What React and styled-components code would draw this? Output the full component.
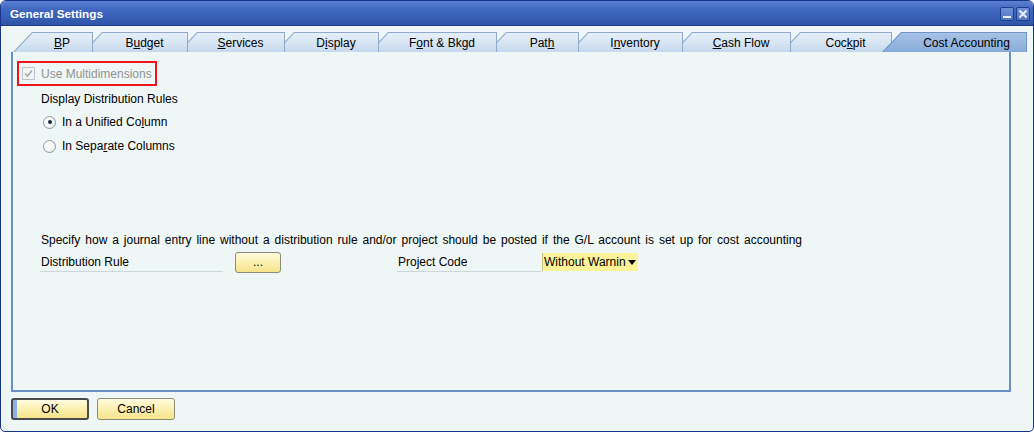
import React from "react";
import styled, { createGlobalStyle } from "styled-components";

const Global = createGlobalStyle`
  html, body {
    margin: 0;
    padding: 0;
    background: #ffffff;
  }
  body {
    font-family: "Liberation Sans", Arial, sans-serif;
  }
`;

const Window = styled.div`
  width: 1034px;
  height: 432px;
  box-sizing: border-box;
  border: 1px solid #17358a;
  border-radius: 6px 6px 5px 5px;
  background: #eff6f6;
  overflow: hidden;
  display: flex;
  flex-direction: column;
`;

const TitleBar = styled.div`
  height: 24px;
  flex: none;
  display: flex;
  align-items: center;
  justify-content: space-between;
  padding: 0 3px 0 9px;
  background: linear-gradient(#5b80d2 0%, #4168c0 35%, #365db3 75%, #2f53a6 100%);
  border-bottom: 1px solid #1d3c8c;
`;

const Title = styled.span`
  color: #ffffff;
  font-weight: 700;
  font-size: 11.7px;
`;

const Controls = styled.div`
  display: flex;
  gap: 2px;
  margin-top: 2px;
`;

const ControlBox = styled.div`
  width: 14px;
  height: 14px;
  box-sizing: border-box;
  border: 1px solid #1e3f8e;
  border-radius: 2px;
  background: linear-gradient(#6f90d6, #5374c2);
  display: flex;
  align-items: center;
  justify-content: center;
`;

const Body = styled.div`
  flex: 1;
  display: flex;
  flex-direction: column;
  padding: 6px 0 0 10px;
`;

const TabStrip = styled.div`
  display: flex;
  height: 20px;
  margin-left: 2px;
`;

const Tab = styled.div`
  flex: none;
  width: ${(p) => p.w}px;
  height: 20px;
  margin-left: ${(p) => (p.first ? 0 : -10)}px;
  position: relative;
  z-index: ${(p) => p.z};
  padding: 1px 1px 0 1px;
  box-sizing: border-box;
  background: ${(p) => (p.active ? "#6f94c6" : "#8ea9cb")};
  clip-path: polygon(0 100%, 19px 0, 100% 0, 100% 100%);
`;

const TabFace = styled.div`
  height: 100%;
  box-sizing: border-box;
  padding-left: ${(p) => (p.active ? 24 : 18)}px;
  display: flex;
  align-items: center;
  justify-content: center;
  font-size: 12px;
  color: #000;
  background: ${(p) =>
    p.active
      ? "linear-gradient(#a6c2e6 0%, #94b5df 60%, #88abd8 100%)"
      : "linear-gradient(#e6eff9 0%, #d6e4f3 55%, #c6d8ec 100%)"};
  clip-path: polygon(0.5px 100%, 18.5px 0, 100% 0, 100% 100%);
  u {
    text-decoration: underline;
    text-underline-offset: 1px;
  }
`;

const Panel = styled.div`
  width: 1000px;
  height: 340px;
  box-sizing: border-box;
  border-left: 2px solid #6b8fc2;
  border-right: 2px solid #6b8fc2;
  border-bottom: 2px solid #6b8fc2;
  padding: 9px 0 0 4px;
  display: flex;
  flex-direction: column;
  font-size: 12px;
  color: #000;
`;

const MultiBox = styled.div`
  align-self: flex-start;
  width: 140px;
  height: 25px;
  box-sizing: border-box;
  border: 2px solid #f0141a;
  display: flex;
  align-items: center;
  padding-left: 3px;
  gap: 6px;
  color: #8e9393;
`;

const CheckBox = styled.div`
  width: 13px;
  height: 13px;
  box-sizing: border-box;
  border: 1px solid #bcc6cc;
  background: #f3f5f5;
  display: flex;
  align-items: center;
  justify-content: center;
`;

const Section = styled.div`
  padding-left: 24px;
  display: flex;
  flex-direction: column;
`;

const Caption = styled.div`
  height: 16px;
  line-height: 16px;
  white-space: nowrap;
  margin-top: ${(p) => p.top || 0}px;
  word-spacing: ${(p) => p.spread || 0}px;
`;

const RadioRow = styled.div`
  height: 24px;
  display: flex;
  align-items: center;
  gap: 6px;
  padding-left: 2px;
  margin-top: ${(p) => p.top || 0}px;
`;

const Radio = styled.div`
  width: 13px;
  height: 13px;
  box-sizing: border-box;
  border-radius: 50%;
  border: 1px solid #8d9aa6;
  background: radial-gradient(circle at 40% 35%, #ffffff 0%, #f2f4f6 60%, #dde3e8 100%);
  display: flex;
  align-items: center;
  justify-content: center;
  &::after {
    content: "";
    width: 4px;
    height: 4px;
    border-radius: 50%;
    background: ${(p) => (p.checked ? "#1d2a3a" : "transparent")};
  }
`;

const FieldRow = styled.div`
  display: flex;
  align-items: center;
  height: 22px;
  margin-top: 3px;
  margin-left: -1px;
`;

const FieldLabel = styled.div`
  width: ${(p) => p.w}px;
  margin-left: ${(p) => p.gap || 0}px;
  height: 18px;
  box-sizing: border-box;
  padding-left: 1px;
  line-height: 16px;
  border-bottom: 1px solid #cdd7da;
  margin-top: 1px;
`;

const YellowButton = styled.button`
  width: ${(p) => p.w}px;
  height: ${(p) => p.h || 22}px;
  margin: 0 0 0 ${(p) => p.gap || 0}px;
  box-sizing: border-box;
  padding: 0;
  font-family: "Liberation Sans", Arial, sans-serif;
  font-size: 12px;
  color: #000;
  border: ${(p) => (p.primary ? "2px solid #4a4a4a" : "1px solid #8d8c78")};
  border-radius: 3px;
  background: ${(p) =>
    p.primary
      ? "linear-gradient(90deg, #8eb0e4 0, #8eb0e4 4px, transparent 4px), linear-gradient(#fffbe0, #fbf0b0 50%, #f5e48a)"
      : "linear-gradient(#fffbe0, #fbf0b0 50%, #f5e48a)"};
  display: flex;
  align-items: center;
  justify-content: center;
`;

const Dropdown = styled.div`
  position: relative;
  width: 96px;
  height: 18px;
  box-sizing: border-box;
  border-left: 1px solid #c9c27a;
  background: #fdf49a;
  font-size: 12px;
  line-height: 18px;
  padding-left: 1px;
  overflow: hidden;
  white-space: nowrap;
`;

const Arrow = styled.span`
  position: absolute;
  right: 0;
  top: 0;
  width: 12px;
  height: 18px;
  background: #fdf49a;
  display: flex;
  align-items: center;
  justify-content: center;
  &::after {
    content: "";
    border-left: 4px solid transparent;
    border-right: 4px solid transparent;
    border-top: 5px solid #000;
  }
`;

const Footer = styled.div`
  display: flex;
  gap: 8px;
  margin-top: 6px;
`;

const tabs = [
  { w: 80, label: <><u>B</u>P</> },
  { w: 105, label: <>B<u>u</u>dget</> },
  { w: 107, label: <><u>S</u>ervices</> },
  { w: 104, label: <>D<u>i</u>splay</> },
  { w: 128, label: <>F<u>o</u>nt &amp; Bkgd</> },
  { w: 92, label: <>Pat<u>h</u></> },
  { w: 114, label: <>I<u>n</u>ventory</> },
  { w: 118, label: <><u>C</u>ash Flow</> },
  { w: 111, label: <>Coc<u>k</u>pit</> },
  { w: 145, label: <>Cost Accounting</>, active: true },
];

const App = () => {
  return (
    <>
      <Global />
      <Window>
        <TitleBar>
          <Title>General Settings</Title>
          <Controls>
            <ControlBox>
              <svg width="10" height="10" viewBox="0 0 10 10">
                <rect x="1" y="7" width="8" height="2" fill="#e8eef9" />
              </svg>
            </ControlBox>
            <ControlBox>
              <svg width="10" height="10" viewBox="0 0 10 10">
                <path d="M1.5 1.5 L8.5 8.5 M8.5 1.5 L1.5 8.5" stroke="#e8eef9" strokeWidth="2" />
              </svg>
            </ControlBox>
          </Controls>
        </TitleBar>
        <Body>
          <TabStrip>
            {tabs.map((t, i) => (
              <Tab
                key={i}
                w={t.w}
                first={i === 0}
                active={t.active}
                z={t.active ? 20 : 10 - i}
              >
                <TabFace active={t.active}>
                  <span>{t.label}</span>
                </TabFace>
              </Tab>
            ))}
          </TabStrip>
          <Panel>
            <MultiBox>
              <CheckBox>
                <svg width="9" height="9" viewBox="0 0 9 9">
                  <path d="M1 4.5 L3.5 7 L8 1.5" fill="none" stroke="#a3abab" strokeWidth="1.6" />
                </svg>
              </CheckBox>
              <span>Use Multidimensions</span>
            </MultiBox>
            <Section>
              <Caption top={5}>Display Distribution Rules</Caption>
              <RadioRow top={3}>
                <Radio checked />
                <span>
                  In a Unified Co<u>l</u>umn
                </span>
              </RadioRow>
              <RadioRow>
                <Radio />
                <span>
                  In Sepa<u>r</u>ate Columns
                </span>
              </RadioRow>
              <Caption top={74} spread={1.6}>
                Specify how a journal entry line without a distribution rule and/or project should be
                posted if the G/L account is set up for cost accounting
              </Caption>
              <FieldRow>
                <FieldLabel w={183}>Distribution Rule</FieldLabel>
                <YellowButton w={46} h={21} gap={12}>
                  ...
                </YellowButton>
                <FieldLabel w={145} gap={116}>
                  Project Code
                </FieldLabel>
                <Dropdown>
                  Without Warning
                  <Arrow />
                </Dropdown>
              </FieldRow>
            </Section>
          </Panel>
          <Footer>
            <YellowButton primary w={78}>
              OK
            </YellowButton>
            <YellowButton w={78}>Cancel</YellowButton>
          </Footer>
        </Body>
      </Window>
    </>
  );
};

export default App;
